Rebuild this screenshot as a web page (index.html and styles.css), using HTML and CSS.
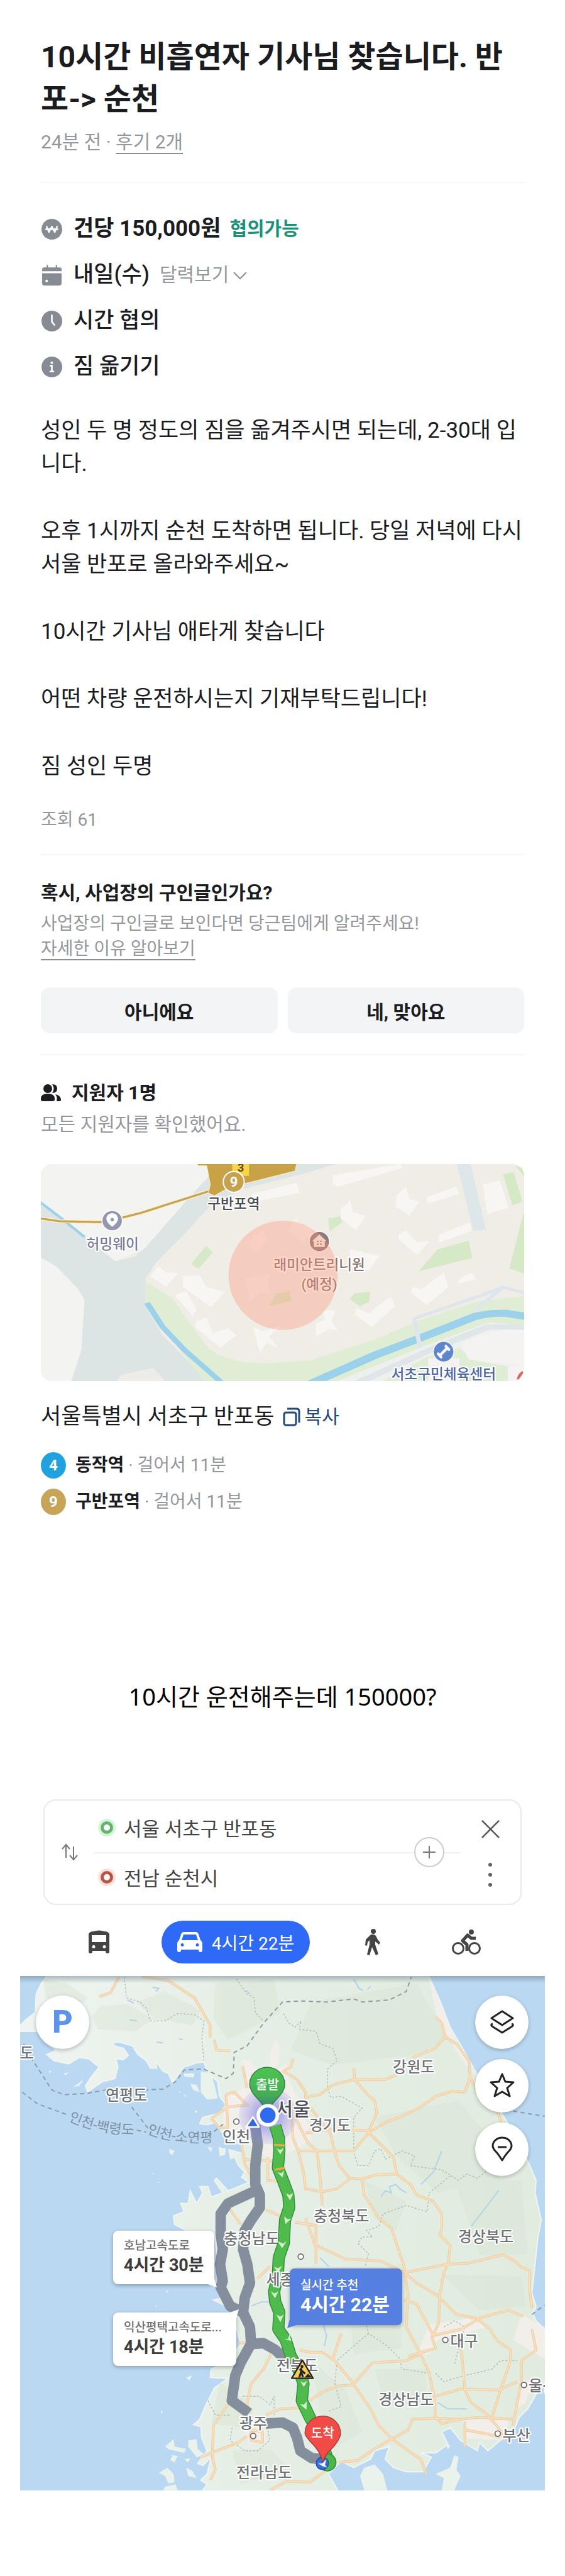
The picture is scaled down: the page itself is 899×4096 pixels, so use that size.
FILE: index.html
```html
<!DOCTYPE html>
<html lang="ko">

<head>
    <meta charset="UTF-8">
    <meta name="viewport" content="width=device-width, initial-scale=1.0">
    <title>10시간 비흡연자 기사님 찾습니다</title>
    <link rel="stylesheet" href="styles.css">
</head>

<body>
    <main class="post">
        <header class="post-header">
            <h1>10시간 비흡연자 기사님 찾습니다. 반포-&gt; 순천</h1>
            <p class="meta">24분 전 · <a href="#reviews">후기 2개</a></p>
        </header>

        <ul class="facts">
            <li>
                <svg class="fact-icon" viewBox="0 0 32 32" aria-hidden="true">
                    <circle cx="16" cy="16" r="16" fill="#868b94" />
                    <path d="M8 12l3.500 8.500 4.500-8.500 4.500 8.500L24 12M7 16h18" fill="none" stroke="#fff" stroke-width="2.400" stroke-linejoin="round" stroke-linecap="round" />
                </svg>
                <strong>건당 150,000원</strong>
                <span class="negotiable">협의가능</span>
            </li>
            <li>
                <svg class="fact-icon" viewBox="0 0 32 32" aria-hidden="true">
                    <path d="M1 10V7q0-3 3-3h4V1q0-1 1-1t1 1v3h12V1q0-1 1-1t1 1v3h4q3 0 3 3v3zM1 13h30v15q0 4-4 4H5q-4 0-4-4z" fill="#868b94" />
                    <circle cx="8" cy="25" r="2" fill="#fff" />
                </svg>
                <span class="medium">내일(수)</span>
                <button class="calendar-btn" type="button">달력보기
                    <svg viewBox="0 0 24 24" aria-hidden="true"><path d="M2 8l10 10L22 8" fill="none" stroke="#8b8f96" stroke-width="2" /></svg>
                </button>
            </li>
            <li>
                <svg class="fact-icon" viewBox="0 0 32 32" aria-hidden="true">
                    <circle cx="16" cy="16" r="16" fill="#868b94" />
                    <path d="M16 7v10l4 5" fill="none" stroke="#fff" stroke-width="2.500" stroke-linecap="round" />
                </svg>
                <span class="medium">시간 협의</span>
            </li>
            <li>
                <svg class="fact-icon" viewBox="0 0 32 32" aria-hidden="true">
                    <circle cx="16" cy="16" r="16" fill="#868b94" />
                    <circle cx="16" cy="9.500" r="2" fill="#fff" />
                    <path d="M13 14h3v9M12.500 23h7" fill="none" stroke="#fff" stroke-width="2.600" />
                </svg>
                <span class="medium">짐 옮기기</span>
            </li>
        </ul>

        <div class="body-text">
            <p>성인 두 명 정도의 짐을 옮겨주시면 되는데, 2-30대 입니다.</p>
            <p>오후 1시까지 순천 도착하면 됩니다. 당일 저녁에 다시 서울 반포로 올라와주세요~</p>
            <p>10시간 기사님 애타게 찾습니다</p>
            <p>어떤 차량 운전하시는지 기재부탁드립니다!</p>
            <p>짐 성인 두명</p>
        </div>
        <p class="views">조회 61</p>

        <section class="survey">
            <h2>혹시, 사업장의 구인글인가요?</h2>
            <p class="survey-text">사업장의 구인글로 보인다면 당근팀에게 알려주세요!<br><a href="#why">자세한 이유 알아보기</a></p>
            <div class="survey-buttons">
                <button type="button">아니에요</button>
                <button type="button">네, 맞아요</button>
            </div>
        </section>

        <section class="applicants">
            <h2>
                <svg viewBox="0 0 32 30" aria-hidden="true">
                    <g fill="#1b1c1f">
                        <circle cx="11" cy="8" r="7" />
                        <path d="M0 24q0-8 11-8t11 8v1q0 3-3 3H3q-3 0-3-3z" />
                        <path d="M18 1q8 0 8 7t-8 7q5-7 0-14zM23 17q9 2 9 9 0 2-2 2h-5q2-6-2-11z" />
                    </g>
                </svg>
                지원자 1명
            </h2>
            <p>모든 지원자를 확인했어요.</p>
        </section>

        <svg class="place-map" viewBox="15 12 2310 1036" role="img" aria-label="구반포역 주변 지도">
            <!-- terrain -->
            <g transform="scale(1.4925 1)">
                <path fill="#f0ece6" d="M0 0H1568V1060H0z" />
                <path fill="#f3f3f1" d="M0 0H560V80L340 420 248 475 0 190zM0 440L60 500 130 610 150 660 140 900 105 1060H0z" />
                <path fill="#dce5e4" d="M0 190L75 270 210 430 248 475 310 455 345 410 480 180 560 50 700 0H980L870 50 660 130 560 200 480 330 380 480 345 560V690L400 830 500 980 540 1060H105L140 900 150 660 130 610 60 500 0 450z" />
                <path fill="#efebe6" d="M262 1020L370 985 415 1060H255z" />
                <path fill="#e0edd5" d="M345 575L430 650 540 880Q590 960 720 963L870 950 1080 850 1220 760 1400 670 1568 640V790L1460 800 940 1060H540L345 690z" />
                <path fill="#eef0ee" d="M940 1060L1240 880 1440 770 1568 780V1060z" />
                <path fill="#e0edd5" d="M1090 1060L1250 930 1350 890 1400 950 1510 980V1060z" />
                <path fill="#f4f3f1" d="M1355 870Q1450 790 1568 800V975Q1440 960 1380 945zM1250 940H1350V1060H1250zM1505 975H1568V1060H1505z" />
                <path fill="none" stroke="#9bd1ea" stroke-width="20" d="M350 675L400 790 470 900 600 1070" />
                <path fill="none" stroke="#9bd1ea" stroke-width="34" d="M860 1070L1080 925 1230 840 1400 740Q1450 722 1500 725L1568 740" />
                <path fill="none" stroke="#9bd1ea" stroke-width="10" d="M0 185L75 270 150 360" />
                <path fill="none" stroke="#dfe5ec" stroke-width="14" d="M1205 750L1225 890M1205 750L1400 650 1490 600 1568 630M1490 600L1400 710" />
                <path fill="none" stroke="#e0e5ea" stroke-width="26" d="M1020 1060L1250 905 1440 790 1568 790" />
                <path fill="#dde7ea" d="M1340 0H1385L1435 325 1395 332z" />
                <path fill="#d5e9c6" d="M540 402L560 435 515 512 490 490zM930 270L970 262 975 290 935 335zM1380 378L1392 460 1220 524 1280 420zM1490 60L1525 50 1552 190 1520 210zM1555 250H1568V540L1510 510zM1065 622L1062 670 1030 692 998 655 1015 630zM765 630L808 620 812 665 740 690zM1530 20L1568 40V90z" />
                <path fill="#f8f6f3" d="M945 65L1160 12 1170 30 960 122 945 110zM685 155L830 100 838 150 700 190zM1150 160L1180 120 1190 180 1222 190 1190 258 1145 215zM1245 170L1340 120 1350 155 1250 200zM1155 350L1180 330 1215 385 1255 380 1215 447 1155 370zM1285 350L1385 290 1390 330 1285 388zM1425 110L1480 90 1508 220 1440 250zM970 230L1000 185 1010 240 1050 260 1020 328 970 270zM360 545L385 500 410 530 450 530 410 598zM465 545L520 545 540 600 600 620 555 695 465 600zM440 640L475 615 510 710 495 735zM505 770L540 745 560 820 610 795 635 830 585 890 505 790zM690 790L720 810 780 785 740 835 770 890 735 865 710 915 700 850zM910 710L955 712 940 760 960 805 930 800 890 838 890 770 920 755zM1020 700L1060 725 1130 645 1145 690 1070 790 1015 730zM1200 600L1230 610 1300 530 1315 600 1245 685 1195 625zM1350 560L1390 530 1405 560 1345 585zM1000 420L1095 450 1060 520 1000 500z" />
                <path fill="#f7f3ef" opacity="0.600" d="M670 380L720 330 735 370 695 440zM800 330L830 260 840 300 900 330 850 385zM665 560L745 535 735 590 750 635 710 625 680 668z" />
            </g>

            <!-- line 9 and its station -->
            <path fill="none" stroke="#fff3cf" stroke-width="18" d="M15 272L105 285 300 289 403 268 493 245 840 135" />
            <path fill="none" stroke="#c7a455" stroke-width="10" d="M15 272L105 285 300 289 403 268 493 245 840 135" />
            <path fill="#c9a248" stroke="#fff0c0" stroke-width="3" d="M764 0H1240L1230 45 990 105 900 132 845 163 815 150 825 110 808 20H764z" />
            <path fill="#f8d648" d="M930 12H1010V68H930z" />
            <text class="exit-no" x="971" y="48">3</text>
            <circle cx="937" cy="97" r="50" fill="#c7a24d" stroke="#fff" stroke-width="6" />
            <text class="line-no" x="937" y="120">9</text>
            <text class="map-label dark" x="937" y="226">구반포역</text>

            <circle cx="356" cy="282" r="49" fill="#9396ae" stroke="#fff" stroke-width="5" />
            <path fill="#fff" d="M356 312Q328 290 328 272A28 26 0 0 1 384 272Q384 290 356 312z" />
            <circle cx="356" cy="277" r="8" fill="#9396ae" />
            <text class="map-label slate" x="358" y="418">허밍웨이</text>

            <circle cx="1346" cy="382" r="48" fill="#8d7c77" stroke="#fff" stroke-width="4" />
            <path fill="#f5ece8" d="M1312 380L1346 348 1380 380H1372V408H1320V380z" />
            <path stroke="#8d7c77" stroke-width="7" stroke-dasharray="7 8" d="M1335 381H1358M1335 395H1358" />
            <text class="map-label brown" x="1346" y="518">래미안트리니원</text>
            <text class="map-label brown" x="1346" y="610">(예정)</text>

            <circle cx="1940" cy="908" r="49" fill="#5f86cd" stroke="#fff" stroke-width="4" />
            <path stroke="#fff" stroke-width="13" stroke-linecap="round" d="M1926 922L1954 894M1914 918L1928 934M1951 882L1966 898" />
            <text class="map-label blue" x="1940" y="1038">서초구민체육센터</text>
            <path fill="#d9695d" d="M2290 1040Q2295 1010 2318 1000L2320 1010 2300 1040z" />

            <!-- meeting area -->
            <circle cx="1173" cy="543" r="261" fill="#ff9678" opacity="0.360" />
        </svg>

        <div class="address">
            <span>서울특별시 서초구 반포동</span>
            <button type="button">
                <svg viewBox="0 0 28 30" aria-hidden="true">
                    <rect x="2" y="8" width="19" height="20" rx="3" />
                    <path d="M7 2h15q4 0 4 4v18" />
                </svg>복사</button>
        </div>

        <ul class="stations">
            <li><span class="badge line4">4</span><span><strong>동작역</strong> · 걸어서 11분</span></li>
            <li><span class="badge line9">9</span><span><strong>구반포역</strong> · 걸어서 11분</span></li>
        </ul>
    </main>

    <p class="caption">10시간 운전해주는데 150000?</p>

    <section class="route">
        <div class="route-card">
            <button class="swap" type="button" aria-label="출발지 도착지 바꾸기">
                <svg viewBox="0 0 28 28" aria-hidden="true"><path d="M8 23V3M2 9l6-7 6 7M20 5v20M14 19l6 7 6-7" /></svg>
            </button>
            <div class="stops">
                <div class="stop"><span class="dot start"></span>서울 서초구 반포동</div>
                <div class="stop"><span class="dot end"></span>전남 순천시</div>
                <button class="add-stop" type="button" aria-label="경유지 추가">
                    <svg viewBox="0 0 20 20" aria-hidden="true"><path d="M10 0v20M0 10h20" /></svg>
                </button>
            </div>
            <div class="route-actions">
                <button type="button" aria-label="닫기">
                    <svg viewBox="0 0 30 30" aria-hidden="true"><path d="M1 1l28 28M29 1L1 29" fill="none" stroke="#555" stroke-width="2.500" /></svg>
                </button>
                <button type="button" aria-label="더보기">
                    <svg class="more" viewBox="0 0 8 40" aria-hidden="true"><g fill="#666"><circle cx="4" cy="4" r="3" /><circle cx="4" cy="20" r="3" /><circle cx="4" cy="36" r="3" /></g></svg>
                </button>
            </div>
        </div>

        <nav class="modes">
            <button type="button" aria-label="버스">
                <svg class="bus" viewBox="0 0 33 37" aria-hidden="true">
                    <path fill="#444" fill-rule="evenodd" d="M8 2q8-3 17 0 6 0 8 4v28q0 3-3 3t-3-3v-1H6v1q0 3-3 3t-3-3V6q2-4 8-4zM5 8v11h23V8zM8 24a2.500 2.500 0 1 0 .1 0zM25 24a2.500 2.500 0 1 0 .1 0z" />
                </svg>
            </button>
            <button class="active" type="button">
                <svg viewBox="0 0 40 32" aria-hidden="true">
                    <path fill="#fff" fill-rule="evenodd" d="M11 0h18q4 0 5 4l3 9q3 2 3 5v11q0 3-3 3t-3-3v-1H6v1q0 3-3 3t-3-3V18q0-3 3-5l3-9q1-4 5-4zM10 4L7 13h26l-3-9zM8 18a2.500 2.500 0 1 0 .1 0zM32 18a2.500 2.500 0 1 0 .1 0z" />
                </svg>
                4시간 22분
            </button>
            <button type="button" aria-label="도보">
                <svg class="walk" viewBox="0 0 24 42" aria-hidden="true">
                    <circle cx="13" cy="4" r="4" fill="#444" />
                    <path fill="#444" d="M8 10q5-3 9 1l3 6 4 5-2 3-6-5 0 5 5 15-4 2-6-13-4 13-4-1 4-16V18l-3 3-1 6-3-1 1-9z" />
                </svg>
            </button>
            <button class="bike-btn" type="button" aria-label="자전거">
                <svg class="bike" viewBox="0 0 46 40" aria-hidden="true">
                    <g fill="none" stroke="#444" stroke-width="3">
                        <circle cx="10" cy="30" r="8.500" />
                        <circle cx="36" cy="30" r="8.500" />
                    </g>
                    <circle cx="31" cy="4" r="4" fill="#444" />
                    <path fill="none" stroke="#444" stroke-width="5" stroke-linejoin="round" d="M38 14h-7l-6-5-8 9 7 6v10" />
                </svg>
            </button>
        </nav>

        <div class="route-map">
            <svg class="land" viewBox="8 26 2504 2452" role="img" aria-label="서울에서 순천까지 경로 지도">
                <defs>
                    <linearGradient id="landFill" x1="0" x2="1" y1="0" y2="0">
                        <stop offset="0" stop-color="#eff4f0" />
                        <stop offset="0.500" stop-color="#e4eee4" />
                        <stop offset="1" stop-color="#e1ecdf" />
                    </linearGradient>
                    <linearGradient id="pinFill" x1="0" x2="0" y1="0" y2="1">
                        <stop offset="0" stop-color="#4dc451" />
                        <stop offset="0.600" stop-color="#45ad55" />
                        <stop offset="1" stop-color="#39718c" />
                    </linearGradient>
                    <radialGradient id="halo">
                        <stop offset="0" stop-color="#5b55e0" stop-opacity="0.750" />
                        <stop offset="1" stop-color="#8f8be8" stop-opacity="0.150" />
                    </radialGradient>
                    <linearGradient id="topShade" x1="0" x2="0" y1="0" y2="1">
                        <stop offset="0" stop-color="#5c7080" stop-opacity="0.450" />
                        <stop offset="1" stop-color="#5c7080" stop-opacity="0" />
                    </linearGradient>
                    <path id="coast" d="M140 20L110 60 85 110 80 200 35 235 0 270V290H90L130 340 180 380 135 400 170 430 240 445 290 415 335 420 385 460 345 510 320 550 330 578 400 530 460 515 475 460 465 420 500 425 525 405 500 370 460 360 450 345 480 340 545 360 570 400 610 430 630 465 660 465 655 430 690 480 715 490 735 535 760 500 790 460 850 440 885 435 900 480 950 530 960 600 990 640 960 680 880 700 865 730 900 735 950 720 970 770 1000 800 1060 830 1070 870 1020 860 1050 930 1080 960 1065 985 1100 1010 1000 1050 945 990 935 1000 975 1060 920 1080 905 1030 865 1030 880 1060 850 1110 820 1050 810 1110 775 1110 790 1150 740 1170 745 1210 800 1240 900 1260 940 1290 960 1500 990 1560 930 1570 960 1585 1010 1610 1040 1700 1060 1780 1000 1870 920 1900 915 1940 1000 1945 935 1990 890 2080 865 2140 835 2165 870 2175 875 2230 900 2290 855 2350 880 2360 920 2320 900 2400 870 2430 900 2450 870 2490H1530L1480 2400 1540 2340 1600 2370 1680 2330 1700 2290 1770 2270 1750 2330 1790 2370 1850 2390 1930 2390 1970 2320 1920 2300 1990 2300 2050 2260 2020 2200 2060 2180 2110 2240 2190 2290 2200 2250 2240 2290 2300 2240 2360 2200 2390 2130 2430 2090 2470 2020 2520 1960V1720L2470 1670 2455 1640 2470 1600 2450 1540 2465 1400 2480 1260 2495 1190 2465 1060 2470 1000 2440 930 2400 850 2330 720 2260 610 2180 480 2130 390 2060 270 2010 140 1955 20z" />
                    <path id="roads" d="M480 30L440 105 385 125M590 30L710 45 840 130 915 260V320M935 330L945 380 1010 383M1070 455L1090 560M990 590L1030 580 1090 640M920 705L1000 650 1100 640M920 705L960 750H1000L990 590M1065 830L1080 920 1110 980M1080 900L1220 910M1190 890V1000L1250 1005M1180 1140L1260 1175M1010 1140L1060 1210M1310 420L1300 460 1265 480 1330 520 1370 580V605L1440 590 1500 545 1600 520 1750 520 1820 490M1880 415L1990 370 2035 315 2020 250 1990 220M2035 315L2090 350 2150 430 2155 510 2190 580 2290 680 2310 750M2155 510L2130 580 2070 575 1990 600 1920 650 1840 690 1750 725 1670 775 1600 860H1330M1600 465L1605 520 1665 590 1700 620 1710 680 1670 770 1790 890 1805 970 1870 1020 1900 1070 1980 1100 2020 1160V1230L2010 1260 2060 1310 2050 1400 2030 1440 2010 1550 2005 1680 1980 1740M1370 775L1500 755 1670 765M1390 650L1490 780 1510 870 1530 930 1580 990 1640 995 1700 975 1805 970M1640 995L1650 1070 1720 1180 1780 1230 1840 1410 1860 1550 1850 1700 1920 1830 1960 1920 1985 2040 1990 2130M1320 700L1380 820 1425 860 1440 990 1445 1050 1450 1120M1300 640L1310 800 1335 860 1360 960 1370 1040 1450 1055 1520 1040 1580 995M1320 1200L1420 1215V1310L1560 1375 1730 1385 1840 1440 2050 1400 2150 1395 2310 1355 2360 1380 2400 1415 2440 1430V1530L2450 1610M1840 1440L1900 1490 2000 1550 2090 1640 2190 1660 2250 1710 2280 1760 2350 1810 2345 1870 2300 2000 2260 2130M2190 1660L2260 1640 2340 1620 2410 1650M1840 1570L1900 1590 1980 1740 2110 1710 2190 1665M1860 1840L1990 1800 1970 1740M1540 1730L1500 1850 1600 1970 1690 1870 1850 1860 1920 1830M1340 1810L1390 1820 1450 1820 1510 1860M1390 2050L1450 2010 1530 1980 1600 1975 1680 2090 1720 2170 1780 2230 1860 2290 1920 2330 1945 2400M1530 2345L1620 2335 1700 2280 1780 2235 1860 2190 1880 2140 1990 2135 2110 2140 2200 2130 2360 2140M1990 2030L2110 1995 2290 2000 2380 1960M2110 1780L2120 1880 2130 2000 2160 2060 2230 2110 2290 2180 2320 2240M2450 1710L2470 1810 2400 1860V1960L2380 2060 2360 2170M2130 2150V2270M2130 2190L2240 2210 2300 2225M1990 2130L2020 2160 2110 2140M1205 1830L1170 1900 1110 1970 1090 2070 1110 2110M1000 2070L930 2170 925 2320 940 2380 915 2430M870 2320L1050 2250 1090 2220M1105 2190L1165 2200V2250L1110 2240zM1180 2120L1250 2090 1340 2085M1140 1470L1200 1410M1050 1775H1100M1200 2478L1280 2435 1390 2440 1460 2390M1370 1180L1415 1310M1420 1310V1400" />
                    <path id="greenRoute" d="M1225 740L1243 800 1245 860 1238 940 1262 1000 1288 1070 1292 1130 1272 1190 1266 1300 1242 1370 1238 1450 1220 1530 1225 1580 1245 1630 1240 1710 1275 1760 1300 1840 1340 1910 1360 1970 1352 2050 1390 2130 1440 2220 1475 2330" />
                    <path id="seaLabelA" d="M238 715Q380 780 540 782" />
                    <path id="seaLabelB" d="M612 775Q740 830 920 818" />
                </defs>

                <path fill="#bbd8f2" d="M0 0H2520V2490H0z" />
                <use href="#coast" fill="url(#landFill)" stroke="#eff5f3" stroke-width="6" />

                <!-- islands -->
                <g fill="#eaf2ec">
                    <path d="M870 480L920 490 940 560 950 610 900 615 870 580zM820 540L850 545 865 580 835 570zM790 490L840 490 835 510 790 505zM260 555L310 520 290 550zM215 490L240 485 225 500zM145 480L160 475 150 490zM720 850L745 860 735 880 720 870zM900 840L925 845 920 865zM955 840L990 850 985 880 960 885zM790 590L802 595 795 603zM840 665L855 672 845 680zM1000 850L1040 860 1050 890 1010 900z" />
                    <path d="M800 1940L830 1930 815 1955zM680 2095L690 2105 680 2112zM700 2270L740 2235 745 2270 800 2280 790 2300 750 2290 720 2285zM735 2310L760 2315 745 2345 725 2335zM810 2240L850 2235 855 2280 890 2310 850 2320 810 2270zM800 2370L830 2385 850 2420 810 2410zM670 2395L710 2370 740 2400 745 2440 715 2445 700 2410zM700 2460L750 2450 760 2478H690zM790 2330L820 2325 810 2345z" />
                    <path d="M1650 2370L1700 2355 1740 2400 1760 2478H1650L1630 2410zM1990 2400L2060 2370 2080 2310 2100 2320 2090 2380 2110 2410 2080 2478H2020L2030 2420zM2040 2260L2060 2265 2050 2285z" />
                    <path d="M700 1525L718 1530 710 1535zM655 1595L662 1600 655 1605zM640 965L648 970 640 974zM665 1005L675 1010 665 1012zM765 575L775 578 768 584z" />
                </g>

                <!-- hills and built-up areas -->
                <g fill="#d6e5d3" opacity="0.450">
                    <path d="M120 40L230 60 330 130 300 160 130 130zM390 170L520 160 640 230 560 290 380 280 350 220zM560 150L700 100 870 190 830 260 650 230zM940 60L1220 40 1250 200 1000 330 930 230zM1400 150L1900 60 2050 330 1900 400 1500 450 1300 380zM1700 700L2100 620 2250 800 2300 1000 2000 1060 1800 880zM2080 1000L2400 1000 2430 1350 2200 1360zM1650 1000L1850 1100 1800 1240 1700 1180zM1560 1450L1820 1500 1830 1800 1600 1830zM2020 1450L2400 1460 2420 1600 2200 1620zM1400 1860L1560 2000 1640 2200 1500 2280 1440 2100zM1700 1900L1940 1900 1950 2060 1750 2080zM960 1960L1100 2060 1060 2180 920 2160zM1020 2290L1200 2280 1300 2380 1060 2450z" />
                </g>
                <g fill="#f4efec" opacity="0.850">
                    <path d="M1060 420L1110 430 1170 520 1280 440 1290 520 1350 640 1400 800 1330 850 1200 900 1050 800 970 740 990 600 1080 560zM1200 390L1230 330 1245 360 1240 450 1200 460zM1960 40L2010 150 2120 400 2200 530 2120 430 2000 240zM1960 1690L2200 1650 2240 1700 2000 1760 1960 1830 1900 1830zM2400 1640L2511 1700V1850L2420 1800 2360 1760zM2120 2140L2340 2140 2320 2240 2130 2230zM1080 2180L1180 2180 1180 2250 1100 2260zM2400 1950L2450 1960 2420 2060 2380 2090z" />
                </g>

                <!-- rivers and lakes -->
                <g class="water">
                    <path d="M1600 40L1625 85 1645 95M1665 90L1680 75M520 140L550 155M640 80L670 85 655 100M1085 95L1105 110M530 235L565 240M660 340L690 345M765 325L785 330M1730 1080L1750 1050 1780 1060 1770 1030 1800 1020 1820 1040 1850 1060M1700 1380L1750 1390M2020 860L1980 960 1920 1020M2290 1050L2230 1130 2160 1220M1440 1370L1480 1410M1455 1690L1470 1740 1460 1790M2000 2060L2050 2090 2140 2090M1110 1600L1160 1580 1230 1580" />
                </g>
                <g class="border-thin">
                    <path d="M505 30L515 130 580 150 610 180 630 240 700 240 760 205 840 210 885 240 875 320 885 430M1040 40L1090 110 1125 130 1130 200 1170 240M1265 205L1290 250 1320 270 1350 240 1340 280 1420 290 1440 350 1500 370 1520 430 1475 470 1475 560 1490 605 1540 600 1640 655 1600 700 1600 870 1620 930 1670 930 1700 860 1730 850 1750 900 1830 860 1890 885 1870 930 2020 950 2100 1000 2140 970 2190 990 2230 960M2060 980L1960 1060 1950 1150 1850 1120 1740 1160 1720 1220 1660 1240 1690 1270 1640 1270 1620 1300 1670 1350 1655 1410M1640 1610L1670 1730 1760 1790 1820 1850 1830 1900 1960 1920M1670 1730L1520 1860 1510 1970 1540 2080 1480 2100M1990 1920L2030 1960 2130 1930 2180 1920 2260 1900 2300 1860 2380 1860M2030 1700L2080 1670 2130 1700 2080 1880M905 2050L940 2120 1010 2120M1070 2030L1150 2030 1200 2070 1220 2030 1220 2120M1020 2180L1010 2240 1080 2290 1140 2290 1200 2240 1190 2190" />
                </g>
                <g class="border">
                    <path d="M25 350L70 430 160 570 220 592 330 585 440 565M600 570L690 565 750 530 790 475 880 468 990 515 1025 490 1030 390 1090 360 1170 250 1260 150 1350 145 1470 150 1600 135 1640 150 1770 140 1850 100 1875 30" />
                    <path d="M18 580L90 635 240 690M530 755L610 770M540 650L620 755M905 790L980 730M2360 670L2511 695M2450 1640L2511 1595" />
                </g>
                <use class="road" href="#roads" />
                <use class="road-inner" href="#roads" />

                <!-- alternative routes -->
                <g class="alt-route">
                    <path d="M1130 740L1142 830 1130 930V1020L1152 1070V1130L1110 1190 1080 1240 1072 1330 1092 1400 1105 1490 1080 1560 1072 1630 1105 1700 1110 1780 1060 1870 1035 1930 1018 2050 1100 2110" />
                    <path d="M1130 1050L1000 1110 965 1160V1250L975 1330 962 1400 975 1480 965 1510 1010 1600 1072 1630" />
                    <path d="M1120 1780L1170 1777 1225 1808 1280 1860M1180 2160L1260 2155 1310 2180 1330 2230 1345 2290 1400 2325 1460 2330" />
                </g>

                <circle cx="1190" cy="690" r="138" fill="url(#halo)" />
                <g class="map-label">
                    <text x="40" y="420">도</text>
                    <text x="515" y="620">연평도</text>
                    <text x="1040" y="818">인천</text>
                    <text class="city" x="1310" y="692">서울</text>
                    <text x="1486" y="764">경기도</text>
                    <text x="1886" y="484">강원도</text>
                    <text x="1541" y="1195">충청북도</text>
                    <text x="1113" y="1304">충청남도</text>
                    <text x="2230" y="1295">경상북도</text>
                    <text x="2127" y="1792">대구</text>
                    <text x="1850" y="2070">경상남도</text>
                    <text x="1120" y="2186">광주</text>
                    <text x="2376" y="2242">부산</text>
                    <text x="2500" y="2006">울산</text>
                    <text x="1172" y="2420">전라남도</text>
                </g>
                <text class="sea-label"><textPath href="#seaLabelA">인천-백령도</textPath></text>
                <text class="sea-label"><textPath href="#seaLabelB">인천-소연평</textPath></text>
                <g fill="#fff" stroke="#666" stroke-width="5">
                    <circle cx="1040" cy="720" r="13" />
                    <circle cx="1347" cy="1364" r="13" />
                    <circle cx="2037" cy="1761" r="13" />
                    <circle cx="2412" cy="1976" r="13" />
                    <circle cx="2287" cy="2208" r="13" />
                    <circle cx="1120" cy="2219" r="13" />
                </g>

                <!-- recommended route -->
                <use class="main-edge" href="#greenRoute" />
                <use class="main-line" href="#greenRoute" />
                <path stroke="#f5a83c" stroke-width="10" d="M1220 831L1270 834M1222 950L1272 940" />
                <g fill="#d5f3c9">
                    <path d="M1232 848L1248 856 1266 846 1250 876zM1236 962L1254 966 1268 954 1260 986zM1276 1062L1294 1070 1312 1060 1296 1096zM1268 1172L1284 1186 1304 1182 1274 1208zM1236 1290L1262 1302 1280 1290 1258 1324zM1220 1412L1238 1420 1258 1408 1238 1444zM1204 1530L1222 1540 1240 1530 1224 1562zM1230 1640L1250 1650 1266 1640 1250 1676zM1268 1756L1286 1756 1294 1734 1302 1766zM1345 1958L1360 1966 1378 1956 1362 1986zM1344 2068L1362 2070 1376 2054 1374 2094z" />
                </g>
                <text class="map-label" x="1248" y="1498">세종</text>
                <text class="map-label" x="1330" y="1908">전북도</text>
                <path fill="#f9ca58" stroke="#222" stroke-width="7" stroke-linejoin="round" d="M1355 1858L1406 1944H1304z" />
                <path fill="none" stroke="#222" stroke-width="9" d="M1350 1895L1348 1915 1340 1940M1349 1915L1358 1938M1342 1900L1368 1922" />
                <circle cx="1353" cy="1888" r="7" fill="#222" />
                <path fill="#222" d="M1366 1940L1382 1922 1400 1940z" />

                <!-- destination -->
                <circle cx="1474" cy="2345" r="41" fill="#4cb649" stroke="#2f8b3c" stroke-width="5" />
                <circle cx="1450" cy="2350" r="29" fill="#3570df" stroke="#1c4caf" stroke-width="5" />
                <path fill="#fff" d="M1430 2350H1450L1470 2330 1462 2356 1474 2370 1450 2362z" />
                <path fill="#f04b46" stroke="#9d3938" stroke-width="4" d="M1452 2346Q1445 2305 1415 2270 1367 2220 1367 2206A85 82 0 0 1 1537 2206Q1537 2235 1490 2285 1460 2315 1452 2346z" />
                <text class="pin-text" x="1452" y="2227">도착</text>

                <!-- departure -->
                <path fill="url(#pinFill)" stroke="#2f7543" stroke-width="4" d="M1187 680Q1170 640 1140 610 1103 570 1103 543A84 82 0 0 1 1271 543Q1271 575 1230 615 1200 645 1187 680z" />
                <text class="pin-text" x="1188" y="566">출발</text>
                <path fill="#2f69dc" stroke="#fff" stroke-width="8" stroke-linejoin="round" d="M1119 698L1148 746H1086z" />
                <circle cx="1190" cy="690" r="54" fill="#fff" />
                <circle cx="1190" cy="690" r="37" fill="#2f6bf0" />
                <path fill="url(#topShade)" d="M0 26H2520V60H0z" />
            </svg>

            <button class="parking" type="button">P</button>
            <div class="map-tools">
                <button type="button" aria-label="지도 레이어">
                    <svg viewBox="0 0 40 40" aria-hidden="true"><path d="M20 3l17 11-17 11L3 14zM5 23q-4 1-1 4l16 10 16-10q3-3-1-4" /></svg>
                </button>
                <button type="button" aria-label="즐겨찾기">
                    <svg viewBox="0 0 40 40" aria-hidden="true"><path d="M20 2l5 12 13 1-10 9 4 13-12-7-12 7 4-13L2 15l13-1z" /></svg>
                </button>
                <button type="button" aria-label="장소 숨기기">
                    <svg viewBox="0 0 40 40" aria-hidden="true"><path d="M20 38Q14 28 8 22 5 18 5 15a15 13 0 0 1 30 0q0 3-3 7-6 6-12 16zM13 17h14" /></svg>
                </button>
            </div>

            <button class="callout honam" type="button">호남고속도로<strong>4시간 30분</strong></button>
            <button class="callout iksan" type="button">익산평택고속도로...<strong>4시간 18분</strong></button>
            <button class="callout recommended" type="button">실시간 추천<strong>4시간 22분</strong></button>
        </div>
    </section>
</body>

</html>
```

FILE: styles.css
```css
* {
    box-sizing: border-box;
    margin: 0;
    padding: 0;
}

body {
    background: #fff;
    color: #1b1c1f;
    font-family: Roboto, "Noto Sans CJK KR", sans-serif;
    padding-bottom: 136px;
}

button {
    border: 0;
    background: none;
    color: inherit;
    font: inherit;
    cursor: pointer;
}

svg {
    display: block;
}

ul {
    list-style: none;
}

/* post */

.post {
    padding: 57px 65px 0;
}

.post-header {
    padding-bottom: 41px;
    border-bottom: 2px solid #f4f5f6;
}

h1 {
    font-size: 48px;
    line-height: 67px;
    word-break: break-all;
}

.meta {
    margin-top: 13px;
    font-size: 30px;
    line-height: 44px;
    color: #94979c;
}

.meta a,
.survey-text a {
    color: inherit;
    text-decoration: none;
    border-bottom: 2px solid #8b8e93;
}

.facts {
    display: flex;
    flex-direction: column;
    gap: 33px;
    margin-top: 53px;
}

.facts li {
    display: flex;
    align-items: center;
    height: 40px;
    font-size: 35px;
    line-height: 40px;
}

.fact-icon {
    width: 33px;
    height: 33px;
    margin: 0 18px 0 1px;
}

.medium {
    font-weight: 500;
}

.negotiable {
    margin-left: 14px;
    font-size: 30px;
    font-weight: bold;
    color: #1a9278;
}

.calendar-btn {
    display: flex;
    align-items: center;
    gap: 6px;
    margin-left: 16px;
    font-size: 30px;
    color: #94979c;
}

.calendar-btn svg {
    width: 24px;
}

.body-text {
    display: flex;
    flex-direction: column;
    gap: 54px;
    margin-top: 55px;
    font-size: 35px;
    line-height: 53px;
    word-break: break-all;
}

.views {
    margin-top: 39px;
    padding-bottom: 34px;
    border-bottom: 2px solid #f4f5f6;
    font-size: 28px;
    line-height: 40px;
    color: #94979c;
}

h2 {
    font-size: 30px;
    line-height: 44px;
}

.survey {
    padding: 38px 0 33px;
    border-bottom: 2px solid #f4f5f6;
}

.survey-text {
    margin-top: 7px;
    font-size: 28px;
    line-height: 40px;
    color: #94979c;
}

.survey-buttons {
    display: flex;
    gap: 16px;
    margin-top: 41px;
}

.survey-buttons button {
    flex: 1;
    height: 73px;
    border-radius: 14px;
    background: #f3f4f6;
    font-size: 30px;
    font-weight: bold;
}

.applicants {
    padding-top: 38px;
}

.applicants h2 {
    display: flex;
    align-items: center;
    gap: 17px;
}

.applicants svg {
    width: 32px;
}

.applicants p {
    margin-top: 6px;
    font-size: 30px;
    line-height: 44px;
    color: #94979c;
}

.place-map {
    width: 100%;
    margin-top: 41px;
    border-radius: 18px;
}

.map-label {
    font-size: 72px;
    font-weight: 500;
    fill: #707276;
    stroke: #fff;
    stroke-width: 12px;
    stroke-linejoin: round;
    paint-order: stroke;
    text-anchor: middle;
}

.place-map .map-label {
    font-size: 68px;
}

.place-map .dark {
    fill: #4a4c55;
}

.place-map .slate {
    fill: #777b96;
}

.place-map .brown {
    fill: #8a7671;
}

.place-map .blue {
    fill: #4c66a5;
}

.line-no,
.exit-no {
    font-size: 66px;
    font-weight: bold;
    fill: #fff;
    text-anchor: middle;
}

.exit-no {
    font-size: 54px;
    fill: #5d4a14;
}

.address {
    display: flex;
    align-items: center;
    gap: 13px;
    margin-top: 32px;
    font-size: 35px;
    line-height: 50px;
}

.address button {
    display: flex;
    align-items: center;
    gap: 7px;
    font-size: 30px;
    color: #24497a;
}

.address svg {
    width: 28px;
    fill: none;
    stroke: #24497a;
    stroke-width: 3;
}

.stations {
    display: flex;
    flex-direction: column;
    gap: 16px;
    margin-top: 31px;
}

.stations li {
    display: flex;
    align-items: center;
    gap: 15px;
    font-size: 28px;
    line-height: 42px;
    color: #94979c;
}

.stations strong {
    color: #1b1c1f;
}

.badge {
    width: 40px;
    height: 42px;
    border-radius: 50%;
    color: #fff;
    font-size: 24px;
    font-weight: bold;
    text-align: center;
}

.line4 {
    background: #21a1de;
}

.line9 {
    background: #c6a559;
}

.caption {
    margin-top: 260px;
    font-family: "Noto Sans", "Noto Sans CJK KR", sans-serif;
    font-size: 38px;
    line-height: 56px;
    text-align: center;
    color: #000;
}

/* route */

.route {
    margin-top: 136px;
}

.route-card {
    display: flex;
    height: 168px;
    margin: 0 69px;
    border: 2px solid #e9e9e9;
    border-radius: 20px;
}

.swap {
    display: flex;
    align-items: center;
    justify-content: center;
    width: 79px;
}

.swap svg,
.add-stop svg {
    width: 28px;
    fill: none;
    stroke: #777;
    stroke-width: 2;
}

.stops {
    position: relative;
    display: flex;
    flex: 1;
    flex-direction: column;
    justify-content: center;
}

.stop {
    display: flex;
    align-items: center;
    gap: 17px;
    height: 78px;
    padding-left: 10px;
    font-size: 31px;
    color: #444;
}

.stop + .stop {
    border-top: 2px solid #f1f1f1;
}

.dot {
    width: 20px;
    height: 20px;
    border: 5px solid #62b46c;
    border-radius: 50%;
    box-shadow: 0 0 0 4px #d5f5d9;
}

.dot.end {
    border-color: #bd5543;
    box-shadow: 0 0 0 4px #fde0db;
}

.add-stop {
    position: absolute;
    top: 50%;
    right: 25px;
    display: flex;
    align-items: center;
    justify-content: center;
    width: 48px;
    height: 48px;
    margin-top: -24px;
    border: 2px solid #ccc;
    border-radius: 50%;
    background: #fff;
}

.add-stop svg {
    width: 20px;
}

.route-actions {
    display: flex;
    flex-direction: column;
    justify-content: center;
    width: 96px;
}

.route-actions button {
    display: flex;
    align-items: center;
    justify-content: center;
    height: 72px;
}

.route-actions svg {
    width: 29px;
}

.route-actions .more {
    width: 8px;
}

.modes {
    display: flex;
    align-items: center;
    gap: 70px;
    margin: 25px 127px 20px;
}

.modes button {
    display: flex;
    align-items: center;
    justify-content: center;
    width: 60px;
    height: 68px;
}

.modes .active {
    gap: 15px;
    width: 236px;
    border-radius: 34px;
    background: #2e6af6;
    color: #fff;
    font-size: 28px;
}

.modes .active svg {
    width: 40px;
}

.modes .bike-btn {
    margin-left: auto;
}

.bus {
    width: 33px;
}

.walk {
    width: 24px;
}

.bike {
    width: 46px;
}

/* route map */

.route-map {
    position: relative;
    margin: 0 32px;
}

.land {
    width: 100%;
}

.road,
.road-inner {
    fill: none;
    stroke: #efcfa2;
    stroke-width: 13px;
    stroke-linejoin: round;
}

.road-inner {
    stroke: #f6dfc2;
    stroke-width: 6px;
}

.water {
    fill: none;
    stroke: #b4d2ee;
    stroke-width: 6px;
}

.border,
.border-thin {
    fill: none;
    stroke: #8e9ca6;
    stroke-width: 6px;
    stroke-dasharray: 20 16;
}

.border-thin {
    stroke: #b1bab6;
    stroke-width: 4px;
    stroke-dasharray: 9 8;
}

.alt-route {
    fill: none;
    stroke: #858e9c;
    stroke-width: 50px;
    stroke-linejoin: round;
}

.main-edge,
.main-line {
    fill: none;
    stroke: #318a3a;
    stroke-width: 58px;
    stroke-linejoin: round;
}

.main-line {
    stroke: #4fbb4c;
    stroke-width: 50px;
}

.city {
    font-size: 90px;
    fill: #4d4e58;
}

.sea-label {
    font-size: 66px;
    fill: #7e92a6;
}

.pin-text {
    font-size: 60px;
    font-weight: 500;
    fill: #fff;
    text-anchor: middle;
}

.parking,
.map-tools button {
    display: flex;
    align-items: center;
    justify-content: center;
    width: 85px;
    height: 85px;
    border-radius: 50%;
    background: #fff;
    box-shadow: 0 2px 6px rgba(0, 0, 0, 0.25);
}

.parking {
    position: absolute;
    top: 31px;
    left: 25px;
    font-size: 50px;
    font-weight: 900;
    color: #5d94ea;
}

.map-tools {
    position: absolute;
    top: 31px;
    right: 26px;
    display: flex;
    flex-direction: column;
    gap: 16px;
}

.map-tools svg {
    width: 40px;
    fill: none;
    stroke: #222;
    stroke-width: 3;
    stroke-linejoin: round;
}

.callout {
    position: absolute;
    height: 85px;
    padding: 0 17px;
    border-radius: 8px;
    background: #fff;
    box-shadow: 0 2px 6px rgba(0, 0, 0, 0.3);
    color: #707070;
    font-size: 19px;
    font-weight: 500;
    line-height: 24px;
    text-align: left;
    white-space: nowrap;
}

.callout strong {
    display: block;
    margin-top: 2px;
    color: #3c3c3c;
    font-size: 27px;
    line-height: 34px;
}

/* pointer toward the route line */
.callout::after {
    content: "";
    position: absolute;
    right: -4px;
    bottom: -5px;
    width: 20px;
    height: 14px;
    background: #fff;
    clip-path: polygon(0 50%, 80% 0, 100% 100%);
}

.honam {
    top: 405px;
    left: 148px;
    width: 161px;
}

.iksan {
    top: 535px;
    left: 148px;
    width: 196px;
}

.iksan::after {
    top: -5px;
    bottom: auto;
    clip-path: polygon(0 50%, 100% 0, 80% 100%);
}

.recommended {
    top: 465px;
    left: 429px;
    width: 179px;
    height: 90px;
    background: #557fe0;
    color: #fff;
}

.recommended strong {
    color: #fff;
    font-size: 30px;
}

.recommended::after {
    right: auto;
    left: -4px;
    background: #557fe0;
    clip-path: polygon(20% 0, 100% 50%, 0 100%);
}
```
